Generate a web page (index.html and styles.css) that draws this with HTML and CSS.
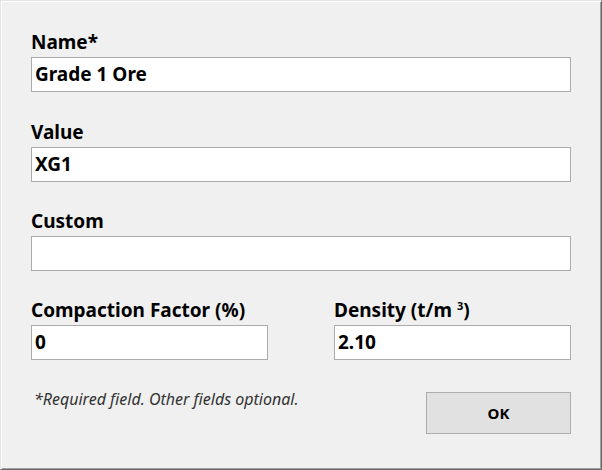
FILE: index.html
```html
<!DOCTYPE html>
<html lang="en">
<head>
    <meta charset="UTF-8">
    <title>Material</title>
    <link rel="stylesheet" href="styles.css">
</head>
<body>

    <div class="window">
        <div class="field first">
            <label>Name*</label>
            <div class="input">Grade 1 Ore</div>
        </div>

        <div class="field">
            <label>Value</label>
            <div class="input">XG1</div>
        </div>

        <div class="field">
            <label>Custom</label>
            <div class="input"></div>
        </div>

        <div class="row">
            <div class="field">
                <label>Compaction Factor (%)</label>
                <div class="input">0</div>
            </div>
            <div class="field">
                <label>Density (t/m <sup>3</sup>)</label>
                <div class="input">2.10</div>
            </div>
        </div>

        <div class="footer">
            <p class="note">*Required field. Other fields optional.</p>
            <button class="ok-btn">OK</button>
        </div>
    </div>

</body>
</html>
```

FILE: styles.css
```css
body {
    margin: 0;
    padding: 0;
    background-color: #f0f0f0;
    font-family: "Noto Sans", "Open Sans", sans-serif;
}

.window {
    width: 602px;
    height: 470px;
    box-sizing: border-box;
    background-color: #f0f0f0;
    border-top: 1px solid #e3e3e3;
    border-left: 1px solid #e3e3e3;
    border-right: 1px solid #696969;
    border-bottom: 1px solid #696969;
    box-shadow: inset 1px 1px 0 #ffffff, inset -1px -1px 0 #a0a0a0;
    padding: 29px 30px 0 30px;
    display: flex;
    flex-direction: column;
}

.field {
    display: flex;
    flex-direction: column;
    margin-bottom: 27px;
}

.field.first {
    margin-bottom: 28px;
}

.field label {
    font-weight: bold;
    font-size: 19px;
    color: #000;
    height: 27px;
    line-height: 24px;
}

.field label sup {
    font-size: 11px;
    vertical-align: 7px;
    line-height: 0;
}

.input {
    height: 35px;
    box-sizing: border-box;
    background-color: #fff;
    border: 1px solid #ababab;
    padding: 0 3px;
    font-weight: bold;
    font-size: 19px;
    line-height: 33px;
    color: #000;
}

.row {
    display: flex;
    gap: 66px;
}

.row .field {
    flex: 1;
}

.footer {
    display: flex;
    justify-content: space-between;
    align-items: flex-start;
    margin-top: 2px;
}

.note {
    margin: 0 0 0 3px;
    font-style: italic;
    font-size: 16px;
    line-height: 20px;
    color: #333;
}

.ok-btn {
    margin-top: 3px;
    width: 145px;
    height: 42px;
    background-color: #e1e1e1;
    border: 1px solid #adadad;
    font-family: "Noto Sans", "Open Sans", sans-serif;
    font-weight: bold;
    font-size: 15px;
    color: #000;
}
```
